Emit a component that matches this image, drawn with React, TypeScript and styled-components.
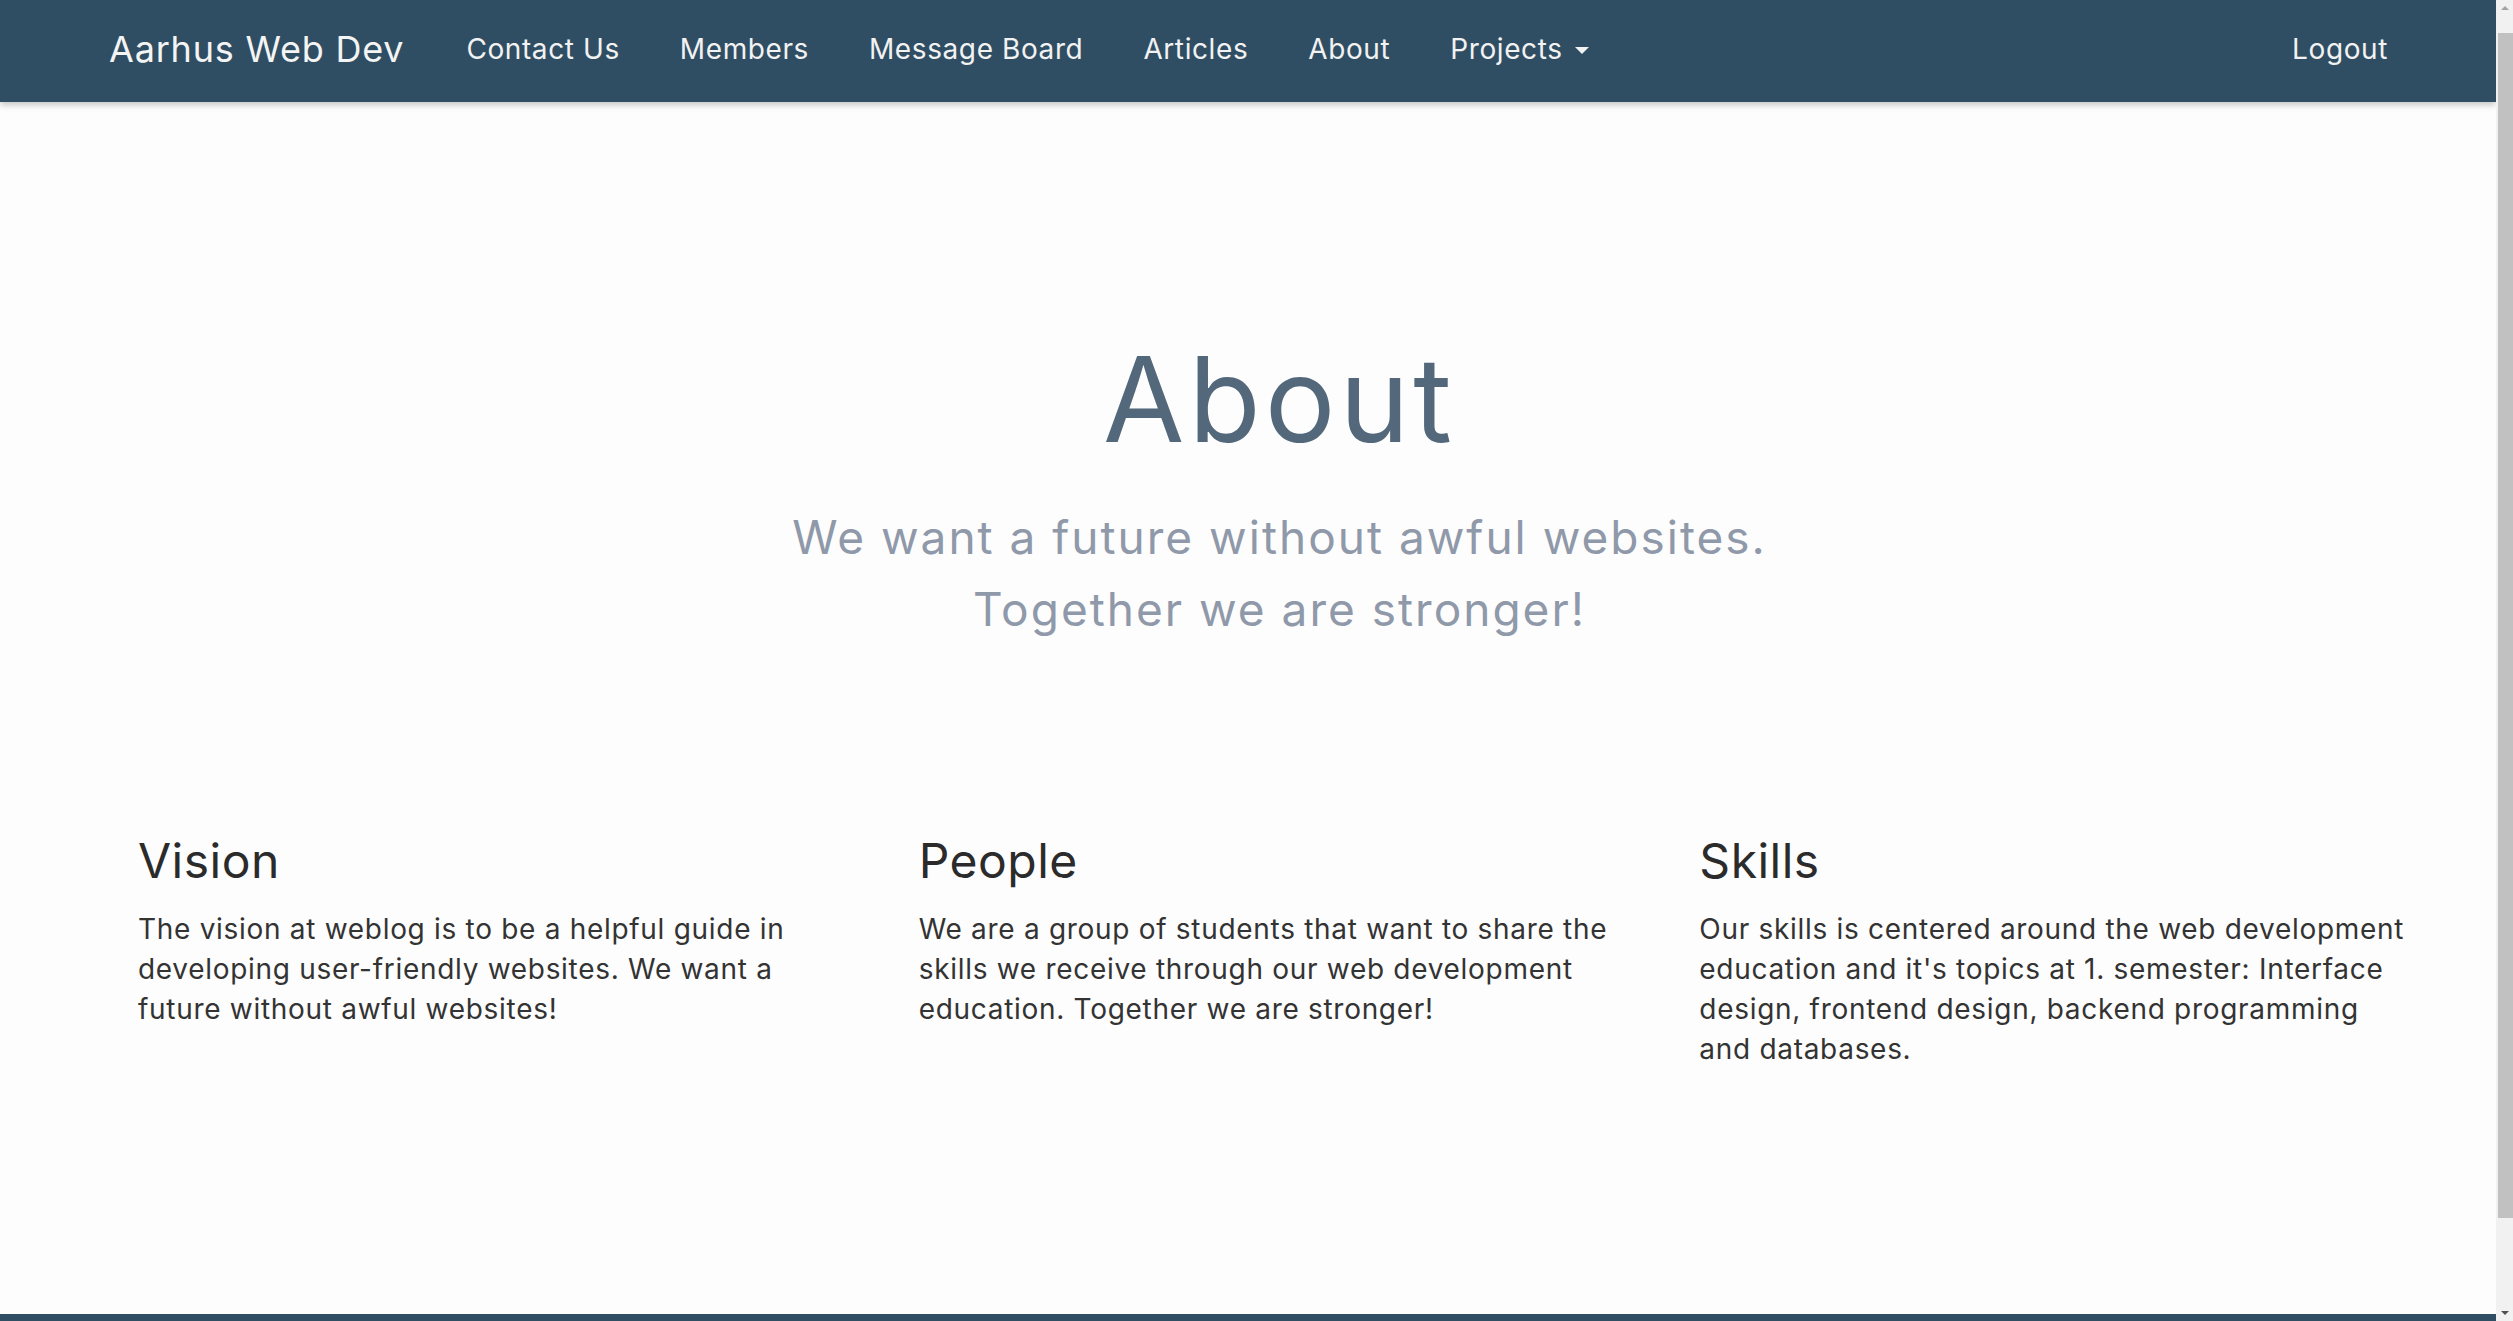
import React from 'react';
import styled, { createGlobalStyle } from 'styled-components';

const GlobalStyle = createGlobalStyle`
  html {
    overflow-y: scroll;
  }
  body {
    margin: 0 17px 0 0;
    background: #fdfdfd;
    font-family: Inter, "Open Sans", sans-serif;
    color: #333;
  }
`;

const navBg = '#2f4e63';

const NavBar = styled.nav`
  box-sizing: border-box;
  height: 102px;
  background: ${navBg};
  box-shadow: 0 3px 6px rgba(0, 0, 0, 0.22);
  display: flex;
  align-items: center;
  padding: 0 108px 5px 109px;
  position: relative;
  z-index: 2;
`;

const Brand = styled.a`
  font-size: 36px;
  color: #f4f4f4;
  text-decoration: none;
  margin-right: 62px;
  letter-spacing: 0.8px;
`;

const NavList = styled.ul`
  display: flex;
  gap: 60px;
  list-style: none;
  margin: 0;
  padding: 0;
  flex: 1;
`;

const NavItem = styled.li<{ $push?: boolean }>`
  margin-left: ${p => (p.$push ? 'auto' : '0')};
`;

const NavLink = styled.a`
  font-size: 28px;
  letter-spacing: 0.6px;
  color: #f2f2f2;
  text-decoration: none;
  display: flex;
  align-items: center;
`;

const Caret = styled.span`
  display: inline-block;
  margin-left: 12px;
  margin-top: 3px;
  border-top: 7px solid #f2f2f2;
  border-left: 7px solid transparent;
  border-right: 7px solid transparent;
`;

const Main = styled.main`
  padding: 227px 0 245px 138px;
`;

const Inner = styled.div`
  width: 2294px;
`;

const Hero = styled.header`
  text-align: center;
  padding-right: 11px;
`;

const Title = styled.h1`
  margin: 0;
  font-size: 118px;
  font-weight: 400;
  line-height: 1.2;
  letter-spacing: 4px;
  color: #54687c;
`;

const Lead = styled.p`
  margin: 30px 0 0;
  font-size: 46px;
  font-weight: 400;
  line-height: 72px;
  letter-spacing: 2px;
  color: #8f99a9;
`;

const Features = styled.section`
  margin-top: 187px;
  display: grid;
  grid-template-columns: repeat(3, 1fr);
  column-gap: 48px;
`;

const Feature = styled.article``;

const FeatureTitle = styled.h3`
  margin: 0 0 20px;
  font-size: 48px;
  font-weight: 400;
  line-height: 1.2;
  letter-spacing: 0.5px;
  color: #2b2b2b;
`;

const FeatureText = styled.p`
  margin: 0;
  max-width: 711px;
  font-size: 28px;
  line-height: 40px;
  letter-spacing: 0.7px;
  color: #333;
`;

const Footer = styled.footer`
  height: 122px;
  background: ${navBg};
`;

/* the browser's scrollbar, which the headless shot leaves out */
const ScrollTrack = styled.div`
  position: fixed;
  top: 0;
  right: 0;
  bottom: 0;
  width: 17px;
  background: #f1f1f1;
  display: flex;
  flex-direction: column;
  align-items: center;
  justify-content: space-between;
  z-index: 5;
`;

const ScrollThumb = styled.div`
  position: absolute;
  top: 33px;
  left: 2px;
  right: 0;
  height: 1185px;
  background: #c1c1c1;
`;

const Arrow = styled.span<{ $down?: boolean }>`
  width: 0;
  height: 0;
  margin: 6px 0;
  border-left: 4px solid transparent;
  border-right: 4px solid transparent;
  ${p =>
    p.$down
      ? 'border-top: 4px solid #505050;'
      : 'border-bottom: 4px solid #a3a3a3;'}
`;

const links = ['Contact Us', 'Members', 'Message Board', 'Articles', 'About'];

const features = [
  {
    title: 'Vision',
    text: 'The vision at weblog is to be a helpful guide in developing user-friendly websites. We want a future without awful websites!',
  },
  {
    title: 'People',
    text: 'We are a group of students that want to share the skills we receive through our web development education. Together we are stronger!',
  },
  {
    title: 'Skills',
    text: "Our skills is centered around the web development education and it's topics at 1. semester: Interface design, frontend design, backend programming and databases.",
  },
];

export default function App(): JSX.Element {
  return (
    <>
      <GlobalStyle />
      <NavBar>
        <Brand href="#">Aarhus Web Dev</Brand>
        <NavList>
          {links.map(l => (
            <NavItem key={l}>
              <NavLink href="#">{l}</NavLink>
            </NavItem>
          ))}
          <NavItem>
            <NavLink href="#">
              Projects
              <Caret />
            </NavLink>
          </NavItem>
          <NavItem $push>
            <NavLink href="#">Logout</NavLink>
          </NavItem>
        </NavList>
      </NavBar>
      <Main>
        <Inner>
          <Hero>
            <Title>About</Title>
            <Lead>
              We want a future without awful websites.
              <br />
              Together we are stronger!
            </Lead>
          </Hero>
          <Features>
            {features.map(f => (
              <Feature key={f.title}>
                <FeatureTitle>{f.title}</FeatureTitle>
                <FeatureText>{f.text}</FeatureText>
              </Feature>
            ))}
          </Features>
        </Inner>
      </Main>
      <Footer />
      <ScrollTrack>
        <Arrow />
        <ScrollThumb />
        <Arrow $down />
      </ScrollTrack>
    </>
  );
}
